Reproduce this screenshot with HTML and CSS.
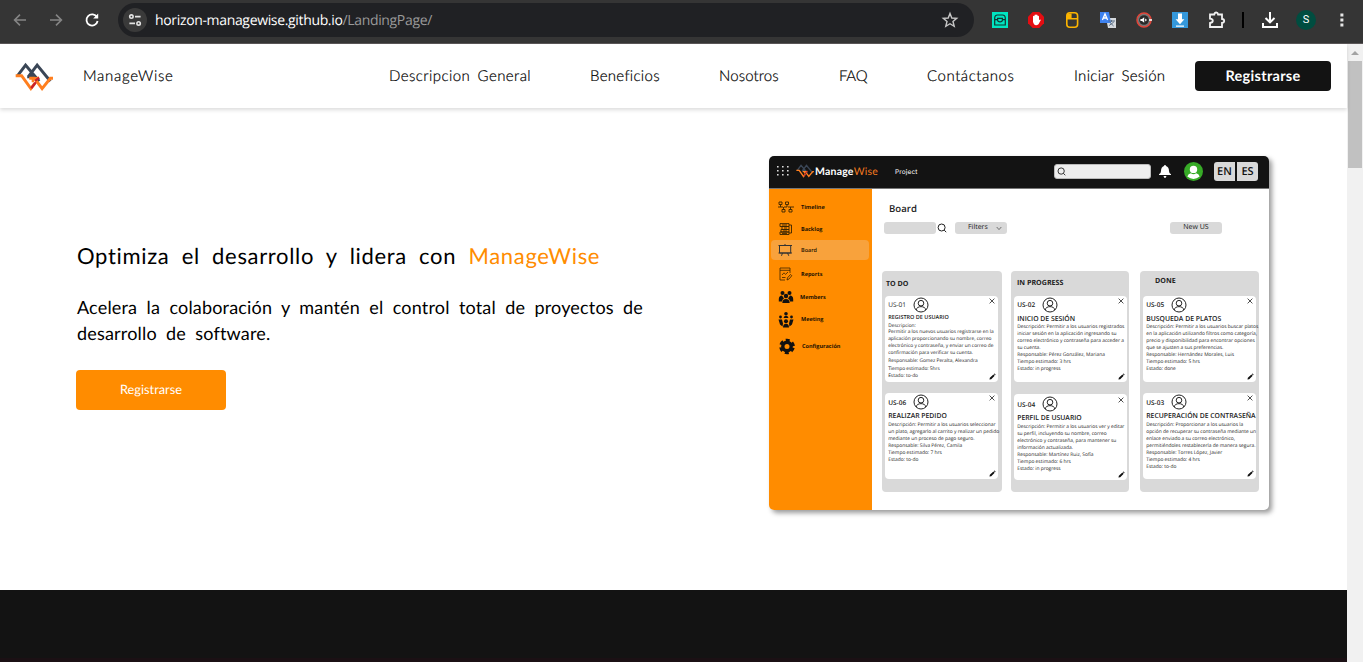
FILE: index.html
```html
<!DOCTYPE html>
<html lang="es">
<head>
<meta charset="utf-8">
<title>ManageWise</title>
<link rel="stylesheet" href="styles.css">
</head>
<body>
<svg class="defs" width="0" height="0">
  <symbol id="logo" viewBox="45 185 115 90">
    <g fill="none" stroke-width="9">
      <path stroke="#3a4656" d="M53 226L77 194L118 243M86 228L112 194L152 243M82 229H101L92 216"/>
      <path stroke="#ff7f1f" d="M47 226H65L93 265L105 249M88 234H104L127 265L152 234H160"/>
      <path stroke="#ff7f1f" stroke-width="7" d="M99 246V236L118 232"/>
      <path stroke="#c8202c" stroke-width="7" d="M94 264L108 246M106 242L118 232"/>
    </g>
  </symbol>
  <symbol id="user" viewBox="0 0 16 16"><g fill="none" stroke="#222" stroke-width="1"><circle cx="8" cy="8" r="7"/><circle cx="8" cy="6.2" r="2.8"/><path d="M3.2 13C3.5 8.5 12.5 8.5 12.8 13"/></g></symbol>
  <symbol id="cross" viewBox="0 0 6 6"><path d="M.6 .6L5.4 5.4M5.4 .6L.6 5.4" stroke="#222" stroke-width=".8"/></symbol>
  <symbol id="pen" viewBox="0 0 8 8"><path d="M.5 7.5L1 5.4L5 1.6L6.5 3L2.5 7ZM5.5 1.2L6.2 .5L7.6 1.8L6.9 2.5Z" fill="#111"/></symbol>
  <symbol id="lens" viewBox="0 0 10 10"><g fill="none" stroke="#222" stroke-width="1"><circle cx="4.6" cy="4.5" r="3.5"/><path d="M7.2 7.1L9.2 9.2"/></g></symbol>
</svg>

<header class="browser">
  <svg class="nav-icon" viewBox="0 0 20 20"><path d="M16 10H5M10 4.6L4.6 10L10 15.4" stroke="#858585"/></svg>
  <svg class="nav-icon forward" viewBox="0 0 20 20"><path d="M4 10H15M10 4.6L15.4 10L10 15.4" stroke="#858585"/></svg>
  <svg class="nav-icon reload" viewBox="0 0 20 20"><path d="M15 7.2A5.6 5.6 0 1 0 15.6 11" stroke="#fff" stroke-width="1.8"/><path d="M16.2 3.6V8.6H11.2Z" fill="#fff"/></svg>
  <div class="address">
    <span class="site-info"><svg width="14" height="14" viewBox="0 0 14 14"><g fill="none" stroke="#e3e3e3" stroke-width="1.6"><circle cx="3.4" cy="3.6" r="1.7"/><path d="M7 3.6H12.6M1.4 10.4H7"/><circle cx="10.6" cy="10.4" r="1.7"/></g></svg></span>
    <span class="url"><span class="host">horizon-managewise.github.io</span><span class="path">/LandingPage/</span></span>
    <svg class="star" viewBox="0 0 18 18"><path d="M9 2.4L10.8 7L15.7 7.4L12 10.5L13.2 15.3L9 12.7L4.8 15.3L6 10.5L2.3 7.4L7.2 7Z" fill="none" stroke="#c7c7c7" stroke-width="1.4"/></svg>
  </div>
  <div class="extensions">
    <svg viewBox="0 0 16 16"><path fill="#00e5c0" d="M0 0H16V16H0Z"/><path d="M2.7 13V6.3Q2.7 3 5.5 3H10.5Q13.3 3 13.3 6.3V13ZM2.7 7.6H5.6M10.4 7.6H13.3M5.6 6.4H10.4V8Q10.4 9.8 8 9.8Q5.6 9.8 5.6 8Z" fill="none" stroke="#12332f" stroke-width="1.2"/></svg>
    <svg viewBox="0 0 16 16"><path fill="#e40d12" d="M4.7 0H11.3L16 4.7V11.3L11.3 16H4.7L0 11.3V4.7Z"/><path fill="#fff" d="M5 4.2Q5.8 3.4 6.5 4.2V3Q7.3 2 8 3Q9 2 9.6 3.3V4Q10.7 3.4 11 4.5V8L12.3 7.4L12.8 8L10.5 12.2Q8 14.4 6 12.3L5 10Z"/></svg>
    <svg viewBox="0 0 16 16"><rect x="2.8" y=".8" width="10.8" height="14.4" rx="3" fill="#353535" stroke="#fcb400" stroke-width="1.6"/><path fill="#fcb400" d="M3 1.5H7.6V6H13.5V7.6H3ZM2.5 6H7.6V7.6H2.5Z"/></svg>
    <svg viewBox="0 0 16 16"><path fill="#d5d9dd" d="M6 6H16V16H8Z"/><path fill="#3e82ef" d="M0 0H9L11 11H0Z"/><path d="M2.4 8L5 2L7.6 8M3.2 6H6.8" fill="none" stroke="#fff" stroke-width="1.3"/><path d="M8.5 9H15M11.5 8V10M9.2 13.5L13.8 10M10 10.5L13.6 14" stroke="#5b6f86" stroke-width="1" fill="none"/></svg>
    <svg viewBox="0 0 16 16"><circle cx="8" cy="8" r="7" fill="#777" stroke="#e04438" stroke-width="1.5"/><circle cx="8" cy="8" r="4.8" fill="#292929"/><path fill="#fff" d="M4.4 7H6L8.2 5.2V10.8L6 9H4.4ZM9.2 6.4L11 8L9.2 9.6ZM13 7.3H16V8.7H13Z"/></svg>
    <svg viewBox="0 0 16 16"><path fill="#3498db" d="M0 0H16V16H0Z"/><path fill="#fff" d="M6 1.5H10V7.2H12.4L8 12.2L3.6 7.2H6ZM4 13.4H12V14.7H4Z"/></svg>
    <svg class="puzzle" viewBox="0 0 18 18"><path d="M2 3.5H6.3Q6.6 1.5 8.2 1.5Q9.8 1.5 10.1 3.5H14V8Q16.2 8.2 16.2 9.9Q16.2 11.6 14 11.8V16H2V12Q4.8 11.7 4.8 9.8Q4.8 8 2 7.7Z" fill="none" stroke="#f1f1f1" stroke-width="1.8"/></svg>
  </div>
  <span class="divider"></span>
  <svg class="download" viewBox="0 0 16 16"><path d="M8 0V9.6M3.5 6L8 10.3L12.5 6M1 11V15H15V11" fill="none" stroke="#fff" stroke-width="2"/></svg>
  <span class="avatar">S</span>
  <svg class="dots" viewBox="0 0 4 14"><path fill="#e6e6e6" d="M.4 .4h3v3h-3zM.4 5.4h3v3h-3zM.4 10.4h3v3h-3z"/></svg>
</header>

<div class="viewport">
  <div class="page">
    <nav class="navbar">
      <svg class="brand-logo"><use href="#logo"/></svg>
      <span class="brand-name">ManageWise</span>
      <div class="links">
        <a class="l-general">Descripcion General</a>
        <a class="l-benefits">Beneficios</a>
        <a class="l-about">Nosotros</a>
        <a class="l-faq">FAQ</a>
        <a class="l-contact">Contáctanos</a>
        <a class="l-login">Iniciar Sesión</a>
      </div>
      <a class="signup">Registrarse</a>
    </nav>
    <main class="hero">
      <section class="pitch">
        <h1>Optimiza el desarrollo y lidera con <span class="accent">ManageWise</span></h1>
        <p>Acelera la colaboración y mantén el control total de proyectos de<br><span class="second">desarrollo de software.</span></p>
        <a class="cta">Registrarse</a>
      </section>
      <section class="app">
        <header class="app-bar">
          <svg class="grid-dots" viewBox="0 0 12 12"><path fill="#ddd" d="M0 1h1.6v1.6H0zM5 1h1.6v1.6H5zM10 1h1.6v1.6h-1.6zM0 5h1.6v1.6H0zM5 5h1.6v1.6H5zM10 5h1.6v1.6h-1.6zM0 9h1.6v1.6H0zM5 9h1.6v1.6H5zM10 9h1.6v1.6h-1.6z"/></svg>
          <svg class="app-logo"><use href="#logo"/></svg>
          <span class="app-name">Manage<span class="wise">Wise</span></span>
          <span class="project">Project</span>
          <span class="search"><svg width="9" height="9"><use href="#lens"/></svg></span>
          <svg class="bell" viewBox="0 0 12 13"><path fill="#fff" d="M6 0Q7 0 7 1Q10 2 10 6Q10 8.5 12 9.3V10H0V9.3Q2 8.5 2 6Q2 2 5 1Q5 0 6 0ZM4.5 11H7.5Q7 13 6 13Q5 13 4.5 11Z"/></svg>
          <svg class="me" viewBox="0 0 20 20"><circle cx="10" cy="10" r="10" fill="#37ab27"/><circle cx="10" cy="7.8" r="3.9" fill="#fff"/><path fill="#fff" d="M3.5 15.3Q4.5 12.5 7.2 11.9Q10 14 12.8 11.9Q15.5 12.5 16.5 15.3Q10 20.5 3.5 15.3Z"/></svg>
          <span class="langs"><b>EN</b><b>ES</b></span>
        </header>
        <div class="app-main">
          <aside class="side">
            <div class="item i1"><svg viewBox="0 0 16 12"><path d="M1 1h3v2.5h-3zM7.5 1h3v2.5h-3zM4 8.5h3v2.5h-3zM11 8.5h3v2.5h-3zM0 6H5M6 6H9M10 6H16M2.5 3.5V6M9 3.5V6M5.5 6V8.5M12.5 6V8.5" fill="none" stroke="#3a2500" stroke-width=".9"/></svg>Timeline</div>
            <div class="item i2"><svg viewBox="0 0 16 12"><path d="M2 .6H11V3.5H2ZM4 3.5H11V6.5H4ZM3 6.5H11V9H3ZM2 9H11V11.5H2ZM11 2H13.5V10H11M4 2H9M6 5H9M5 8H9M4 10.4H9" fill="none" stroke="#3a2500" stroke-width=".9"/></svg>Backlog</div>
            <div class="item i3 active"><svg viewBox="0 0 16 12"><path d="M1.5 1.5H12.7V9H1.5ZM.5 1.5H14M.5 9H14M7 0V1.5M4.5 9L3.5 11.8M9.5 9L10.8 11.8" fill="none" stroke="#333" stroke-width="1"/></svg>Board</div>
            <div class="item i4"><svg viewBox="0 0 16 14"><path d="M7 13H2V1H12V6M2 3.3H12M4 8L6 5.8L7.5 7.4L10 5M4 10.5H7.5M9 13L9.5 10.8L12.5 7.5L13.8 8.7L11 12Z" fill="none" stroke="#3a2500" stroke-width=".8"/></svg>Reports</div>
            <div class="item i5"><svg viewBox="0 0 16 14"><g fill="#111"><circle cx="4.5" cy="3" r="2"/><circle cx="11.5" cy="3" r="2"/><circle cx="8" cy="6" r="2.2"/><path d="M.8 9Q1 5.5 4 5.5L6 8.5Q4 9.5 4 11.5H.8ZM15.2 9Q15 5.5 12 5.5L10 8.5Q12 9.5 12 11.5H15.2ZM4.3 13Q4.5 9 8 9Q11.5 9 11.7 13Z"/></g></svg>Members</div>
            <div class="item i6"><svg viewBox="0 0 16 16"><g fill="#111"><circle cx="8" cy="2.2" r="1.8"/><path d="M5.5 6.5Q6 4.3 8 4.3Q10 4.3 10.5 6.5Z"/><circle cx="2.5" cy="5.5" r="1.4"/><circle cx="13.5" cy="5.5" r="1.4"/><path d="M.5 8H4L5 12L4.5 15L2 13ZM15.5 8H12L11 12L11.5 15L14 13Z"/><circle cx="8" cy="9.8" r="2"/><path d="M5 16Q5 12.2 8 12.2Q11 12.2 11 16Z"/></g></svg>Meeting</div>
            <div class="item i7"><svg viewBox="0 0 16 16"><circle cx="8" cy="8" r="4.2" fill="none" stroke="#111" stroke-width="3.4"/><circle cx="8" cy="8" r="6.3" fill="none" stroke="#111" stroke-width="3" stroke-dasharray="3.9 2.7" stroke-dashoffset="-1.3"/></svg>Configuración</div>
          </aside>
          <div class="board">
            <h2>Board</h2>
            <div class="tools">
              <span class="pill query"></span>
              <svg class="lens"><use href="#lens"/></svg>
              <span class="pill filters">Filters<svg width="6" height="5" viewBox="0 0 6 5"><path d="M.7 1L3 3.6L5.3 1" fill="none" stroke="#555" stroke-width=".8"/></svg></span>
              <span class="pill new">New US</span>
            </div>
            <div class="columns">
              <section class="col todo">
                <h3>TO DO</h3>
                <article class="card first">
                  <div class="head"><span class="id plain">US-01</span><svg class="user"><use href="#user"/></svg><svg class="cross"><use href="#cross"/></svg></div>
                  <h4 class="t1">REGISTRO DE USUARIO</h4>
                  <div class="lines">Descripcion:<br>Permitir a los nuevos usuarios registrarse en la<br>aplicación proporcionando su nombre, correo<br>electrónico y contraseña, y enviar un correo de<br>confirmación para verificar su cuenta.</div>
                  <div class="lines loose">Responsable: Gomez Peralta, Alexandra</div>
                  <div class="lines loose">Tiempo estimado: 5hrs<br>Estado: to-do</div>
                  <svg class="pen"><use href="#pen"/></svg>
                </article>
                <article class="card">
                  <div class="head"><span class="id">US-06</span><svg class="user"><use href="#user"/></svg><svg class="cross"><use href="#cross"/></svg></div>
                  <h4>REALIZAR PEDIDO</h4>
                  <div class="lines">Descripción: Permitir a los usuarios seleccionar<br>un plato, agregarlo al carrito y realizar un pedido<br>mediante un proceso de pago seguro.<br>Responsable: Silva Pérez, Camila<br>Tiempo estimado: 7 hrs<br>Estado: to-do</div>
                  <svg class="pen"><use href="#pen"/></svg>
                </article>
              </section>
              <section class="col progress">
                <h3>IN PROGRESS</h3>
                <article class="card">
                  <div class="head"><span class="id">US-02</span><svg class="user"><use href="#user"/></svg><svg class="cross"><use href="#cross"/></svg></div>
                  <h4>INICIO DE SESIÓN</h4>
                  <div class="lines">Descripción: Permitir a los usuarios registrados<br>iniciar sesión en la aplicación ingresando su<br>correo electrónico y contraseña para acceder a<br>su cuenta.<br>Responsable: Pérez González, Mariana<br>Tiempo estimado: 3 hrs<br>Estado: in progress</div>
                  <svg class="pen"><use href="#pen"/></svg>
                </article>
                <article class="card low">
                  <div class="head"><span class="id">US-04</span><svg class="user"><use href="#user"/></svg><svg class="cross"><use href="#cross"/></svg></div>
                  <h4>PERFIL DE USUARIO</h4>
                  <div class="lines">Descripción: Permitir a los usuarios ver y editar<br>su perfil, incluyendo su nombre, correo<br>electrónico y contraseña, para mantener su<br>información actualizada.<br>Responsable: Martínez Ruiz, Sofía<br>Tiempo estimado: 6 hrs<br>Estado: in progress</div>
                  <svg class="pen"><use href="#pen"/></svg>
                </article>
              </section>
              <section class="col done">
                <h3>DONE</h3>
                <article class="card">
                  <div class="head"><span class="id">US-05</span><svg class="user"><use href="#user"/></svg><svg class="cross"><use href="#cross"/></svg></div>
                  <h4>BUSQUEDA DE PLATOS</h4>
                  <div class="lines">Descripción: Permitir a los usuarios buscar platos<br>en la aplicación utilizando filtros como categoría,<br>precio y disponibilidad para encontrar opciones<br>que se ajusten a sus preferencias.<br>Responsable: Hernández Morales, Luis<br>Tiempo estimado: 5 hrs<br>Estado: done</div>
                  <svg class="pen"><use href="#pen"/></svg>
                </article>
                <article class="card">
                  <div class="head"><span class="id">US-03</span><svg class="user"><use href="#user"/></svg><svg class="cross"><use href="#cross"/></svg></div>
                  <h4>RECUPERACIÓN DE CONTRASEÑA</h4>
                  <div class="lines">Descripción: Proporcionar a los usuarios la<br>opción de recuperar su contraseña mediante un<br>enlace enviado a su correo electrónico,<br>permitiéndoles restablecerla de manera segura.<br>Responsable: Torres López, Javier<br>Tiempo estimado: 4 hrs<br>Estado: to-do</div>
                  <svg class="pen"><use href="#pen"/></svg>
                </article>
              </section>
            </div>
          </div>
        </div>
      </section>
    </main>
    <section class="band"></section>
  </div>
  <div class="scrollbar"><svg width="16" height="17" viewBox="0 0 16 17"><path d="M4 11L8 7L12 11Z" fill="#a3a3a3"/></svg><div class="thumb"></div></div>
</div>
</body>
</html>
```
FILE: styles.css
```css
* { box-sizing: border-box; }
body { margin: 0; width: 1363px; height: 662px; overflow: hidden; background: #fff; font-family: Lato, sans-serif; text-rendering: geometricPrecision; }
.defs { position: absolute; }
svg { display: block; flex: none; }
h1, h2, h3, h4, p { margin: 0; }

/* Browser toolbar */
.browser { display: flex; align-items: center; height: 44px; padding: 0 19px 4px 10px; background: #353535; border-bottom: 1px solid #5b5758; }
.nav-icon { width: 20px; height: 20px; fill: none; stroke-width: 1.6; }
.forward { margin-left: 16px; }
.reload { margin-left: 16px; }
.address { display: flex; align-items: center; width: 856px; height: 34px; margin-left: 16px; padding: 0 15px 0 5px; border-radius: 17px; background: #202124; }
.site-info { display: grid; place-items: center; width: 24px; height: 24px; border-radius: 12px; background: #3a3a3a; }
.url { flex: 1; margin: 2px 0 0 8px; color: #fff; font: 14px "Open Sans", sans-serif; letter-spacing: -.34px; white-space: nowrap; }
.path { color: #9a9a9a; }
.star { width: 18px; height: 18px; }
.extensions { display: flex; align-items: center; gap: 20px; margin-left: 18px; }
.extensions svg { width: 16px; height: 16px; }
.extensions .puzzle { width: 18px; height: 18px; margin: 0 -1px 0 0; }
.divider { width: 2px; height: 16px; margin-left: 17px; background: #000; }
.download { width: 16px; height: 16px; margin-left: 18px; }
.avatar { display: grid; place-items: center; width: 20px; height: 20px; margin-left: 18px; border-radius: 50%; background: #004d40; color: #fff; font: 11px Roboto, sans-serif; }
.dots { width: 4px; height: 14px; margin-left: auto; }

/* Page frame */
.viewport { display: grid; grid-template-columns: 1347px 16px; height: 618px; }
.page { display: flex; flex-direction: column; }
.scrollbar { background: #f1f1f1; padding: 0 1px; }
.scrollbar svg { margin-left: -1px; }
.thumb { height: 107px; background: #c1c1c1; }

.navbar { display: flex; align-items: center; height: 64px; padding: 0 16px 0 15px; box-shadow: 0 2px 4px rgba(0,0,0,.14); font-size: 15px; color: #000; white-space: nowrap; z-index: 1; }
.brand-logo { width: 38px; height: 30px; margin-top: 2px; }
.brand-name { margin-left: 30px; width: 90px; letter-spacing: .72px; font-weight: 300; }
.links { display: flex; gap: 60px; margin-left: auto; font-weight: 300; }
.links, .brand-name { -webkit-text-stroke: .2px #000; }
.l-general { width: 141px; letter-spacing: .42px; word-spacing: 3px; }
.l-benefits { width: 69px; letter-spacing: .3px; }
.l-about { width: 60px; letter-spacing: .12px; }
.l-faq { width: 28px; letter-spacing: -.3px; }
.l-contact { width: 87px; letter-spacing: .55px; }
.l-login { width: 91px; letter-spacing: .3px; word-spacing: 3px; }
.signup { display: grid; place-items: center; width: 136px; height: 30px; margin-left: 30px; border-radius: 4px; background: #131313; color: #fff; font-weight: 700; font-size: 14.5px; letter-spacing: .3px; }

.hero { display: flex; height: 482px; padding: 48px 78px 0 76px; }
.pitch { width: 693px; padding-top: 83px; color: #000; white-space: nowrap; }
h1 { height: 34px; padding-left: 1px; line-height: 34px; font-size: 22px; font-weight: 400; letter-spacing: .67px; word-spacing: 6px; }
.accent { color: #ff8c00; }
.pitch p { padding-left: 1px; margin-top: 21px; line-height: 26px; font-size: 18px; letter-spacing: .18px; word-spacing: 4.5px; }
.cta { display: grid; place-items: center; width: 150px; height: 40px; margin-top: 24px; padding-bottom: 3px; border-radius: 4px; background: #ff8c00; color: #fff; font-size: 12.8px; }
.band { flex: 1; background: #131313; border-bottom: 4px solid #1b1014; }

/* Product preview */
.app { width: 500px; height: 354px; overflow: hidden; border-radius: 5px; background: #fff; box-shadow: 3px 3px 5px rgba(0,0,0,.4); font-family: "Open Sans", sans-serif; color: #222; }
.app-bar { display: flex; align-items: center; height: 33px; padding: 0 12px 2px 8px; background: #131313; color: #fff; border-bottom: 1px solid #777; }
.grid-dots { width: 12px; height: 12px; }
.app-logo { width: 18px; height: 14px; margin-left: 7px; }
.app-name { width: 63px; margin: 2px 0 0 1px; font: 700 10.5px Lato, sans-serif; letter-spacing: .2px; }
.wise { color: #f37a1f; font-weight: 400; }
.project { margin: 2px 0 0 17px; font: 6.5px Inter, sans-serif; letter-spacing: .15px; }
.search { display: flex; align-items: center; width: 97px; height: 15px; margin-left: auto; padding-left: 2px; border: 1px solid #bbb; border-radius: 3px; background: #eee; }
.bell { width: 12px; height: 13px; margin-left: 8px; }
.me { width: 19px; height: 19px; margin-left: 13px; }
.langs { display: flex; gap: 2px; margin-left: 11px; }
.langs b { display: grid; place-items: center; width: 21px; height: 19px; background: #d9d9d9; color: #111; font-size: 11px; font-weight: 600; }
.langs b:first-child { border-radius: 3px 0 0 3px; }
.langs b:last-child { border-radius: 0 3px 3px 0; }
.search, .bell, .me, .langs { position: relative; left: 1px; }
.app-main { display: flex; height: 321px; }
.side { width: 103px; padding: 9px 3px 0 2px; background: #ff8c00; font-size: 5.5px; font-weight: 700; color: #1c1100; }
.item { display: flex; align-items: center; gap: 7px; height: 20px; padding-left: 7px; border-radius: 4px; }
.item svg { width: 16px; height: 14px; }
.i1 { margin-top: -1px; }
.i2 { margin-top: 2px; }
.i3 { margin-top: 1px; }
.active { background: #f8a23c; font-weight: 600; }
.i4 { margin-top: 4px; }
.i5 { margin-top: 3px; gap: 6px; }
.i6 { margin-top: 2px; }
.item.i6 svg, .item.i7 svg { height: 17px; }
.i7 { margin-top: 7px; padding-left: 8px; }
.board { flex: 1; padding: 12px 10px 0; }
h2 { height: 17px; padding-left: 7px; line-height: 16px; font-size: 9.6px; font-weight: 600; }
.tools { display: flex; align-items: center; height: 12px; margin-top: 4px; padding-left: 2px; }
.pill { height: 12px; border-radius: 3px; background: #d9d9d9; font-size: 7px; line-height: 12px; text-align: center; }
.query { width: 52px; }
.lens { width: 10px; height: 10px; margin: 0 8px 0 1px; }
.filters { display: flex; align-items: center; gap: 8px; width: 52px; padding-left: 13px; }
.new { width: 52px; margin-left: 163px; }
.columns { display: flex; align-items: flex-start; margin-top: 37px; }
.col { height: 220.5px; padding: 0 4px 0 3px; border-radius: 4px; background: #d9d9d9; }
.todo { width: 120px; }
.progress { width: 118px; margin-left: 9px; }
.done { width: 119px; margin-left: 11px; }
h3 { height: 24.5px; line-height: 26px; padding-left: 1px; font-size: 7.1px; font-weight: 700; white-space: nowrap; }
.progress h3 { line-height: 24px; padding-left: 3px; }
.done h3 { line-height: 20px; padding-left: 12px; }
.card { position: relative; width: 112.5px; height: 86px; margin-bottom: 11.5px; padding: 0 0 0 3.2px; border-radius: 4px; background: #fff; white-space: nowrap; }
.low { margin-top: 12.5px; padding-top: 1px; }
.head { display: flex; align-items: center; height: 18px; }
.id { width: 25px; font-size: 6.5px; font-weight: 600; }
.plain { font-weight: 400; }
.user { width: 16px; height: 16px; }
.cross { width: 6px; height: 6px; margin: 0 2.5px 8px auto; }
h4 { height: 10px; line-height: 12px; font-size: 6.85px; font-weight: 600; }
.t1 { height: 8.5px; line-height: 6px; font-size: 5.5px; }
.lines { line-height: 7px; font-size: 4.9px; color: #222; position: relative; top: .5px; }
.first .lines { line-height: 6.9px; font-size: 4.84px; }
.first .loose { margin-top: 1.2px; }
.pen { position: absolute; right: 2px; bottom: 2px; width: 7px; height: 7px; }
```
